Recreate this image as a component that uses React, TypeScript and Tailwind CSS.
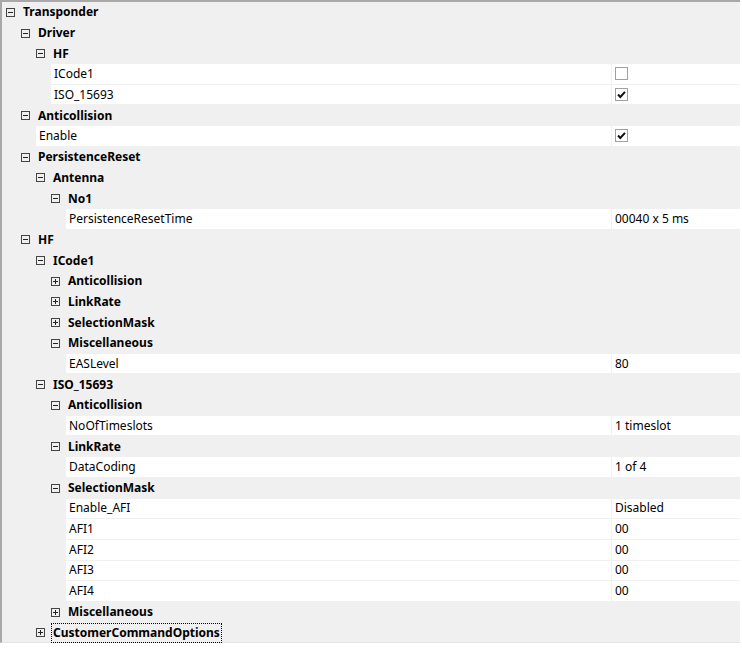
import React from "react";

type Row = {
  label: string;
  level: number;
  kind: "cat" | "prop";
  open?: boolean;
  value?: string;
  check?: boolean;
  focus?: boolean;
};

const rows: Row[] = [
  { label: "Transponder", level: 0, kind: "cat", open: true },
  { label: "Driver", level: 1, kind: "cat", open: true },
  { label: "HF", level: 2, kind: "cat", open: true },
  { label: "ICode1", level: 3, kind: "prop", check: false },
  { label: "ISO_15693", level: 3, kind: "prop", check: true },
  { label: "Anticollision", level: 1, kind: "cat", open: true },
  { label: "Enable", level: 2, kind: "prop", check: true },
  { label: "PersistenceReset", level: 1, kind: "cat", open: true },
  { label: "Antenna", level: 2, kind: "cat", open: true },
  { label: "No1", level: 3, kind: "cat", open: true },
  { label: "PersistenceResetTime", level: 4, kind: "prop", value: "00040 x 5 ms" },
  { label: "HF", level: 1, kind: "cat", open: true },
  { label: "ICode1", level: 2, kind: "cat", open: true },
  { label: "Anticollision", level: 3, kind: "cat", open: false },
  { label: "LinkRate", level: 3, kind: "cat", open: false },
  { label: "SelectionMask", level: 3, kind: "cat", open: false },
  { label: "Miscellaneous", level: 3, kind: "cat", open: true },
  { label: "EASLevel", level: 4, kind: "prop", value: "80" },
  { label: "ISO_15693", level: 2, kind: "cat", open: true },
  { label: "Anticollision", level: 3, kind: "cat", open: true },
  { label: "NoOfTimeslots", level: 4, kind: "prop", value: "1 timeslot" },
  { label: "LinkRate", level: 3, kind: "cat", open: true },
  { label: "DataCoding", level: 4, kind: "prop", value: "1 of 4" },
  { label: "SelectionMask", level: 3, kind: "cat", open: true },
  { label: "Enable_AFI", level: 4, kind: "prop", value: "Disabled" },
  { label: "AFI1", level: 4, kind: "prop", value: "00" },
  { label: "AFI2", level: 4, kind: "prop", value: "00" },
  { label: "AFI3", level: 4, kind: "prop", value: "00" },
  { label: "AFI4", level: 4, kind: "prop", value: "00" },
  { label: "Miscellaneous", level: 3, kind: "cat", open: false },
  { label: "CustomerCommandOptions", level: 2, kind: "cat", open: false, focus: true },
];

const Expander = ({ open }: { open?: boolean }) => (
  <svg width="9" height="9" viewBox="0 0 9 9" className="shrink-0">
    <rect x="0.5" y="0.5" width="8" height="8" fill="none" stroke="#444" />
    <line x1="2" y1="4.5" x2="7" y2="4.5" stroke="#222" />
    {!open && <line x1="4.5" y1="2" x2="4.5" y2="7" stroke="#222" />}
  </svg>
);

const CheckBox = ({ on }: { on?: boolean }) => (
  <svg width="13" height="13" viewBox="0 0 13 13">
    <rect x="0.5" y="0.5" width="12" height="12" fill="#fff" stroke="#a0a0a0" />
    {on && (
      <path d="M3 6.5 L5.3 9 L10 3.8" fill="none" stroke="#111" strokeWidth="2" />
    )}
  </svg>
);

export default function App() {
  return (
    <div
      className="w-[742px] h-[648px] bg-white overflow-hidden text-[12px] text-black"
      style={{ fontFamily: '"Noto Sans", "Open Sans", sans-serif' }}
    >
      <div className="w-[740px] h-[643px] bg-[#f0f0f0] border-t-2 border-l-2 border-[#a8a8a8] border-b border-b-[#e4e4e4]">
        {rows.map((r, i) =>
          r.kind === "cat" ? (
            <div key={i} className="h-[20.7px] flex items-center" style={{ paddingLeft: 4 + 15 * r.level }}>
              <Expander open={r.open} />
              <span
                className={
                  "font-bold ml-[6px] leading-none px-px py-[3px] " +
                  (r.focus ? "border border-dotted border-black" : "border border-transparent")
                }
              >
                {r.label}
              </span>
            </div>
          ) : (
            <div key={i} className="h-[20.7px] flex" style={{ paddingLeft: 4 + 15 * r.level }}>
              <div className="flex-1 flex bg-white border-b border-[#f0f0f0]">
                <div className="flex-1 flex items-center pl-[3px] border-r border-[#f0f0f0]">{r.label}</div>
                <div className="w-[128px] flex items-center pl-[3px]">
                  {r.value !== undefined ? r.value : <CheckBox on={r.check} />}
                </div>
              </div>
            </div>
          )
        )}
      </div>
    </div>
  );
}
